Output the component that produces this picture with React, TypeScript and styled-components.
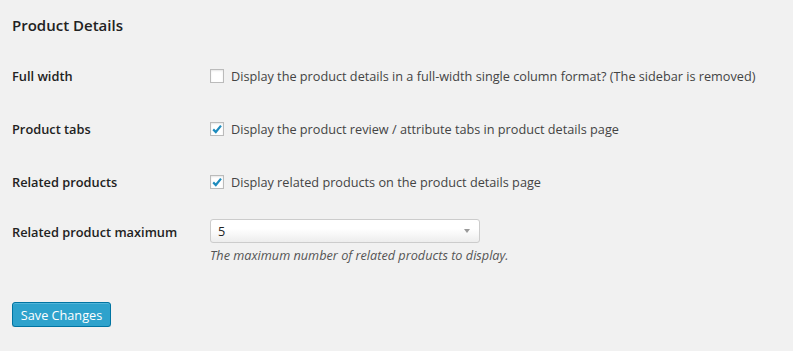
import styled, { createGlobalStyle } from 'styled-components';

const Global = createGlobalStyle`
  html, body {
    margin: 0;
    padding: 0;
    background: #f1f1f1;
  }
  body {
    font-family: "Open Sans", "Liberation Sans", sans-serif;
    font-size: 12.7px;
    color: #444;
  }
`

const Page = styled.div`
  padding: 0 12px;
`

const Heading = styled.h3`
  margin: 0;
  padding-top: 15px;
  height: 49px;
  box-sizing: border-box;
  font-size: 15px;
  font-weight: 600;
  color: #222;
  line-height: 20px;
`

const Row = styled.div<{ $top?: boolean }>`
  display: grid;
  grid-template-columns: 198px 1fr;
  align-items: ${p => (p.$top ? 'start' : 'center')};
  min-height: 53px;
`

const Label = styled.div<{ $pad?: number }>`
  font-size: 12.8px;
  font-weight: 600;
  color: #222;
  padding-top: ${p => p.$pad || 0}px;
`

const CheckLabel = styled.label`
  display: flex;
  align-items: center;
  gap: 7px;
  color: #444;
`

const Box = styled.span`
  width: 14px;
  height: 14px;
  border: 1px solid #bbb;
  background: #fff;
  box-shadow: inset 0 1px 2px rgba(0, 0, 0, 0.1);
  display: flex;
  align-items: center;
  justify-content: center;
  box-sizing: border-box;
  flex-shrink: 0;
`

const Field = styled.div`
  padding-top: 11px;
`

const Select = styled.div`
  width: 270px;
  height: 24px;
  box-sizing: border-box;
  border: 1px solid #ccc;
  border-radius: 3px;
  background: linear-gradient(#fff 40%, #ededed);
  display: flex;
  align-items: center;
  justify-content: space-between;
  padding: 0 9px 0 7px;
  color: #222;
`

const Arrow = styled.span`
  width: 0;
  height: 0;
  border-left: 3px solid transparent;
  border-right: 3px solid transparent;
  border-top: 4px solid #999;
`

const Description = styled.p`
  margin: 3px 0 0;
  font-style: italic;
  color: #555;
`

const Submit = styled.div`
  padding-top: 38px;
`

const Button = styled.button`
  font-family: inherit;
  font-size: 12.7px;
  color: #fff;
  background: #2ea2cc;
  border: 1px solid #0074a2;
  border-radius: 3px;
  box-shadow: inset 0 1px 0 rgba(120, 200, 230, 0.5), 0 1px 0 rgba(0, 0, 0, 0.15);
  height: 25px;
  width: 99px;
  padding: 0;
  line-height: 22px;
`

function Check({ checked }: { checked?: boolean }) {
  return (
    <Box>
      {checked && (
        <svg width="12" height="12" viewBox="0 0 12 12">
          <path d="M2.2 6.4 L4.8 9 L10 2.6" fill="none" stroke="#1e8cbe" strokeWidth="2.2" />
        </svg>
      )}
    </Box>
  );
}

export default function App() {
  return (
    <Page>
      <Global />
      <Heading>Product Details</Heading>
      <Row>
        <Label>Full width</Label>
        <CheckLabel>
          <Check />
          Display the product details in a full-width single column format? (The sidebar is removed)
        </CheckLabel>
      </Row>
      <Row>
        <Label>Product tabs</Label>
        <CheckLabel>
          <Check checked />
          Display the product review / attribute tabs in product details page
        </CheckLabel>
      </Row>
      <Row>
        <Label>Related products</Label>
        <CheckLabel>
          <Check checked />
          Display related products on the product details page
        </CheckLabel>
      </Row>
      <Row $top>
        <Label $pad={15}>Related product maximum</Label>
        <Field>
          <Select>
            <span>5</span>
            <Arrow />
          </Select>
          <Description>The maximum number of related products to display.</Description>
        </Field>
      </Row>
      <Submit>
        <Button>Save Changes</Button>
      </Submit>
    </Page>
  );
}
